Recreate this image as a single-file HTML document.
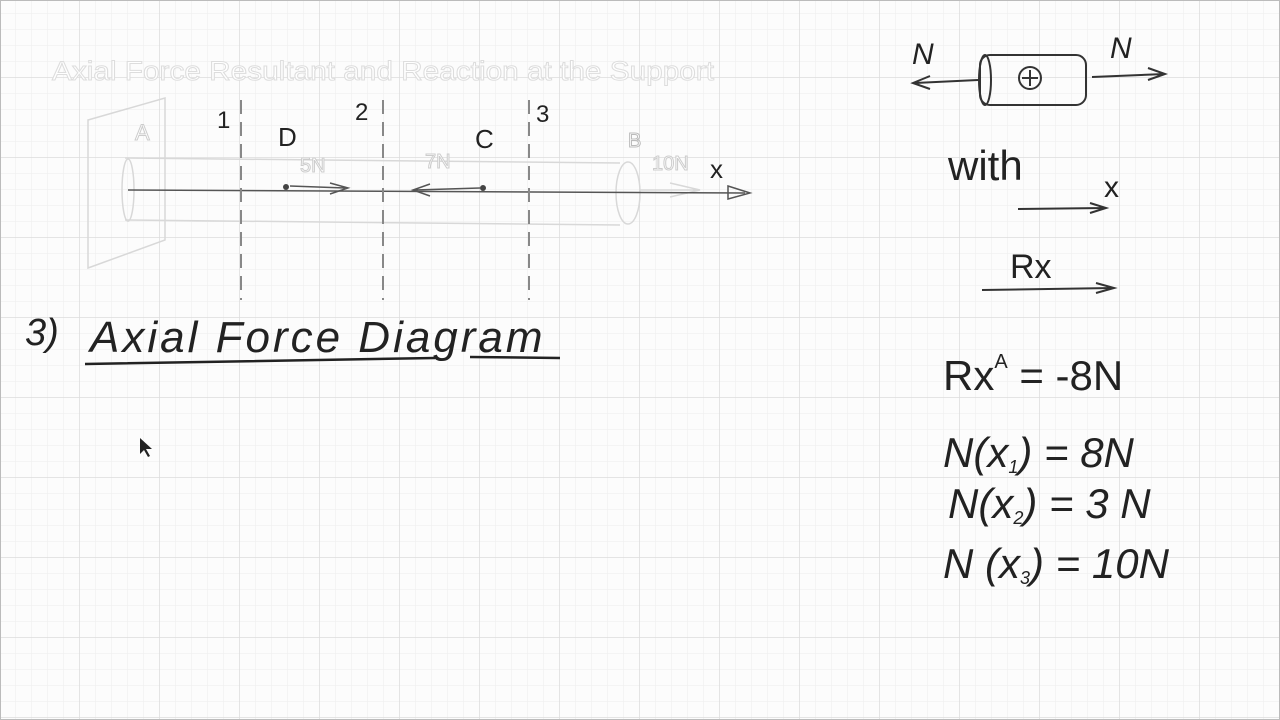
<!DOCTYPE html>
<html><head><meta charset="utf-8"><style>
html,body{margin:0;padding:0;background:#fff;}
svg{display:block}
.h{font-family:"Liberation Sans",sans-serif;fill:#222;}
</style></head><body>
<svg width="1280" height="720" viewBox="0 0 1280 720" xmlns="http://www.w3.org/2000/svg">
<defs>
<pattern id="mi" width="16" height="16" patternUnits="userSpaceOnUse" y="14">
<path d="M16 0V16M0 16H16" stroke="#ededed" stroke-width="1" fill="none"/>
</pattern>
<pattern id="ma" width="80" height="80" patternUnits="userSpaceOnUse" y="78">
<path d="M80 0V80M0 80H80" stroke="#dcdcdc" stroke-width="1.5" fill="none"/>
</pattern>
</defs>
<rect width="1280" height="720" fill="#fcfcfc"/>
<rect width="1280" height="720" fill="url(#mi)"/>
<rect width="1280" height="720" fill="url(#ma)"/>
<rect x="0.5" y="0.5" width="1279" height="719" fill="none" stroke="#bbb"/>

<text x="52" y="80" font-family="Liberation Sans" font-size="27" fill="#fff" stroke="#ddd" stroke-width="1" textLength="662" lengthAdjust="spacingAndGlyphs">Axial Force Resultant and Reaction at the Support</text>
<g stroke="#d8d8d8" fill="none" stroke-width="1.5">
<path d="M88 120 L165 98 L165 240 L88 268 Z"/>
<path d="M125 158 L620 163 M125 220 L620 225"/>
<ellipse cx="128" cy="190" rx="6" ry="31"/>
<ellipse cx="628" cy="193" rx="12" ry="31"/>
<path d="M640 190 L700 190 M670 183 L700 190 L670 197"/>
</g>
<text x="300" y="172" font-family="Liberation Sans" font-size="20" fill="#fff" stroke="#ccc">5N</text>
<text x="425" y="168" font-family="Liberation Sans" font-size="20" fill="#fff" stroke="#ccc">7N</text>
<text x="652" y="170" font-family="Liberation Sans" font-size="20" fill="#fff" stroke="#ccc">10N</text>
<text x="628" y="147" font-family="Liberation Sans" font-size="20" fill="#fff" stroke="#bbb">B</text>
<text x="135" y="140" font-family="Liberation Sans" font-size="22" fill="#fff" stroke="#ccc">A</text>
<g stroke="#555" fill="none" stroke-width="1.5">
<path d="M128 190 L745 193"/>
<path d="M728 186 L750 193 L728 199 Z"/>
<path d="M290 186 L345 188 M330 183 L348 188 L330 194"/>
<path d="M480 188 L415 190 M430 184 L413 190 L430 196"/>
</g>
<circle cx="286" cy="187" r="3" fill="#444"/><circle cx="483" cy="188" r="3" fill="#444"/>
<g stroke="#888" stroke-width="2" stroke-dasharray="14 8">
<path d="M241 100V300M383 100V300M529 100V300"/>
</g>
<text class="h" x="217" y="128" font-size="24">1</text>
<text class="h" x="355" y="120" font-size="24">2</text>
<text class="h" x="536" y="122" font-size="24">3</text>
<text class="h" x="278" y="146" font-size="26">D</text>
<text class="h" x="475" y="148" font-size="26">C</text>
<text class="h" x="710" y="178" font-size="26">x</text>

<text class="h" x="25" y="345" font-size="38" font-style="italic">3)</text>
<text class="h" x="90" y="352" font-size="44" font-style="italic" letter-spacing="3">Axial Force Diagram</text>
<path d="M85 364 L435 358 M470 357 L560 358" stroke="#222" stroke-width="2.5" fill="none"/>
<path d="M140 438 l0 16 l4 -4 l4 7 l2 -1 l-4 -7 l6 0 Z" fill="#222"/>

<g stroke="#333" stroke-width="2" fill="none">
<rect x="980" y="55" width="106" height="50" rx="10"/>
<ellipse cx="985" cy="80" rx="6" ry="25"/>
<path d="M978 80 L915 83 M930 76 L913 83 L930 89"/>
<path d="M1092 77 L1165 74 M1148 68 L1165 74 L1148 80"/>
<circle cx="1030" cy="78" r="11"/><path d="M1022 78H1038M1030 70V86"/>
<path d="M1018 209 L1105 208 M1090 203 L1106 208 L1090 213"/>
<path d="M982 290 L1113 288 M1096 283 L1114 288 L1096 293"/>
</g>
<text class="h" x="912" y="64" font-size="30" font-style="italic">N</text>
<text class="h" x="1110" y="58" font-size="30" font-style="italic">N</text>
<text class="h" x="948" y="180" font-size="42">with</text>
<text class="h" x="1104" y="197" font-size="30">x</text>
<text class="h" x="1010" y="278" font-size="34">Rx</text>
<text class="h" x="943" y="390" font-size="42">Rx<tspan font-size="20" dy="-22">A</tspan><tspan dy="22"> = -8N</tspan></text>
<text class="h" x="943" y="467" font-size="42" font-style="italic">N(x<tspan font-size="18" dy="6">1</tspan><tspan dy="-6">) = 8N</tspan></text>
<text class="h" x="948" y="518" font-size="42" font-style="italic">N(x<tspan font-size="18" dy="6">2</tspan><tspan dy="-6">) = 3 N</tspan></text>
<text class="h" x="943" y="578" font-size="42" font-style="italic">N (x<tspan font-size="18" dy="6">3</tspan><tspan dy="-6">) = 10N</tspan></text>
</svg>
</body></html>
